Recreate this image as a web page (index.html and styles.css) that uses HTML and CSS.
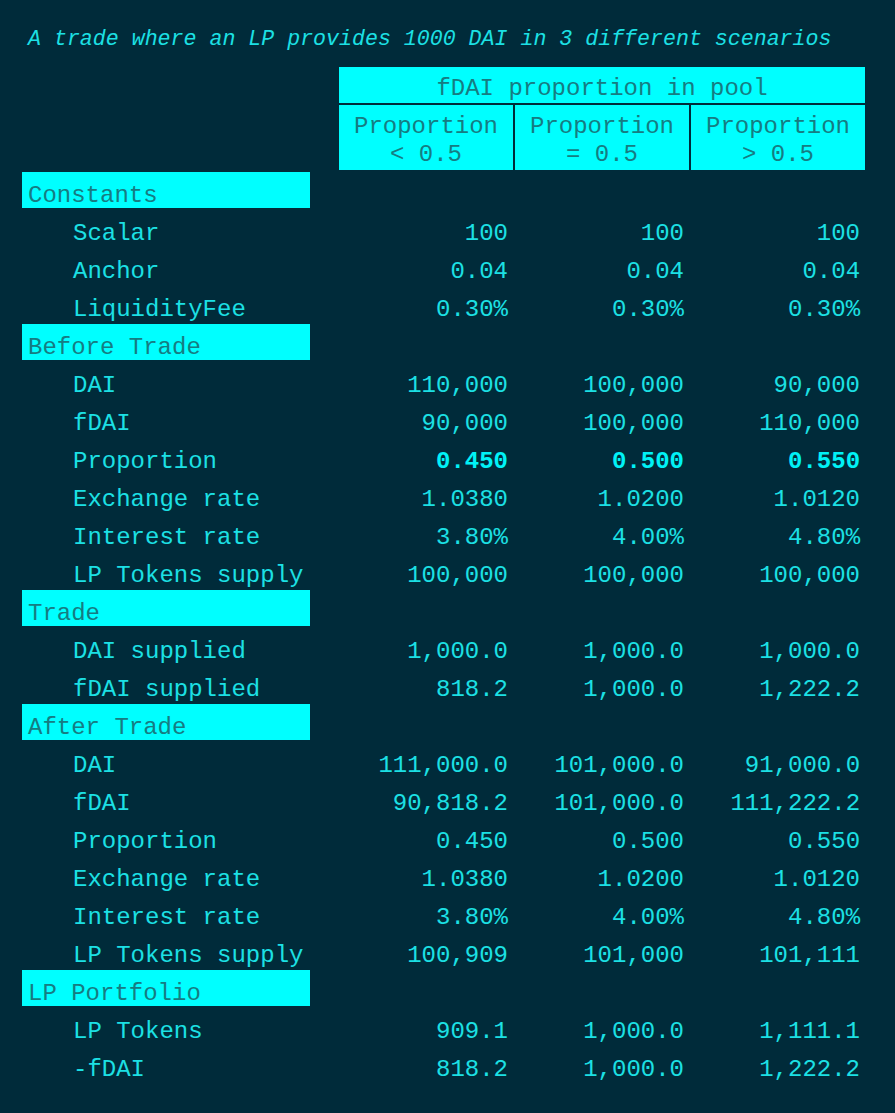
FILE: index.html
```html
<!DOCTYPE html>
<html>
<head>
<meta charset="utf-8">
<link rel="stylesheet" href="styles.css">
</head>
<body>
<div class="page">
  <div class="title">A trade where an LP provides 1000 DAI in 3 different scenarios</div>
  <table class="grid">
    <colgroup>
      <col class="c-label"><col class="c-spacer"><col class="c-val"><col class="c-val"><col class="c-val">
    </colgroup>
    <thead>
      <tr><th></th><th></th><th class="hd" colspan="3">fDAI proportion in pool</th></tr>
      <tr><th></th><th></th><th class="hd sub">Proportion<br>&lt; 0.5</th><th class="hd sub">Proportion<br>= 0.5</th><th class="hd sub">Proportion<br>&gt; 0.5</th></tr>
    </thead>
    <tbody>
      <tr><td class="sec">Constants</td><td colspan="4"></td></tr>
      <tr><td class="lbl">Scalar</td><td></td><td class="v">100</td><td class="v">100</td><td class="v">100</td></tr>
      <tr><td class="lbl">Anchor</td><td></td><td class="v">0.04</td><td class="v">0.04</td><td class="v">0.04</td></tr>
      <tr><td class="lbl">LiquidityFee</td><td></td><td class="v">0.30%</td><td class="v">0.30%</td><td class="v">0.30%</td></tr>
      <tr><td class="sec">Before Trade</td><td colspan="4"></td></tr>
      <tr><td class="lbl">DAI</td><td></td><td class="v">110,000</td><td class="v">100,000</td><td class="v">90,000</td></tr>
      <tr><td class="lbl">fDAI</td><td></td><td class="v">90,000</td><td class="v">100,000</td><td class="v">110,000</td></tr>
      <tr><td class="lbl">Proportion</td><td></td><td class="v b">0.450</td><td class="v b">0.500</td><td class="v b">0.550</td></tr>
      <tr><td class="lbl">Exchange rate</td><td></td><td class="v">1.0380</td><td class="v">1.0200</td><td class="v">1.0120</td></tr>
      <tr><td class="lbl">Interest rate</td><td></td><td class="v">3.80%</td><td class="v">4.00%</td><td class="v">4.80%</td></tr>
      <tr><td class="lbl">LP Tokens supply</td><td></td><td class="v">100,000</td><td class="v">100,000</td><td class="v">100,000</td></tr>
      <tr><td class="sec">Trade</td><td colspan="4"></td></tr>
      <tr><td class="lbl">DAI supplied</td><td></td><td class="v">1,000.0</td><td class="v">1,000.0</td><td class="v">1,000.0</td></tr>
      <tr><td class="lbl">fDAI supplied</td><td></td><td class="v">818.2</td><td class="v">1,000.0</td><td class="v">1,222.2</td></tr>
      <tr><td class="sec">After Trade</td><td colspan="4"></td></tr>
      <tr><td class="lbl">DAI</td><td></td><td class="v">111,000.0</td><td class="v">101,000.0</td><td class="v">91,000.0</td></tr>
      <tr><td class="lbl">fDAI</td><td></td><td class="v">90,818.2</td><td class="v">101,000.0</td><td class="v">111,222.2</td></tr>
      <tr><td class="lbl">Proportion</td><td></td><td class="v">0.450</td><td class="v">0.500</td><td class="v">0.550</td></tr>
      <tr><td class="lbl">Exchange rate</td><td></td><td class="v">1.0380</td><td class="v">1.0200</td><td class="v">1.0120</td></tr>
      <tr><td class="lbl">Interest rate</td><td></td><td class="v">3.80%</td><td class="v">4.00%</td><td class="v">4.80%</td></tr>
      <tr><td class="lbl">LP Tokens supply</td><td></td><td class="v">100,909</td><td class="v">101,000</td><td class="v">101,111</td></tr>
      <tr><td class="sec">LP Portfolio</td><td colspan="4"></td></tr>
      <tr><td class="lbl">LP Tokens</td><td></td><td class="v">909.1</td><td class="v">1,000.0</td><td class="v">1,111.1</td></tr>
      <tr><td class="lbl">-fDAI</td><td></td><td class="v">818.2</td><td class="v">1,000.0</td><td class="v">1,222.2</td></tr>
    </tbody>
  </table>
</div>
</body>
</html>
```

FILE: styles.css
```css
html, body {
  margin: 0;
  padding: 0;
  background: #002b3a;
}
body {
  width: 895px;
  height: 1113px;
  overflow: hidden;
  font-family: "Liberation Mono", "Courier New", monospace;
  color: #1ce0e4;
}
.page {
  padding: 26px 0 0 20px;
}
.title {
  font-style: italic;
  font-size: 21.6px;
  line-height: 24px;
  padding-left: 8px;
  padding-top: 1px;
  margin-bottom: 14px;
}
.grid {
  border-collapse: separate;
  border-spacing: 2px;
  table-layout: fixed;
  width: 847px;
  font-size: 24px;
}
.c-label { width: 288px; }
.c-spacer { width: 25px; }
.c-val { width: 174px; }
.grid th, .grid td {
  white-space: nowrap;
  font-weight: normal;
  box-sizing: content-box;
}
.grid td {
  padding: 12px 0 0;
  height: 24px;
  line-height: 24px;
}
.grid th {
  padding: 8px 0 0;
  height: 28px;
  line-height: 28px;
}
.hd {
  background: #00ffff;
  color: #167c82;
  text-align: center;
}
.grid .hd.sub {
  padding: 8px 0 1px;
  height: 56px;
}
.sec {
  background: #00ffff;
  color: #167c82;
  padding-left: 6px !important;
  text-align: left;
}
.lbl {
  padding-left: 51px !important;
}
.v {
  text-align: right;
  padding-right: 5px !important;
}
.b {
  font-weight: bold !important;
  color: #00f2f6;
}
```
